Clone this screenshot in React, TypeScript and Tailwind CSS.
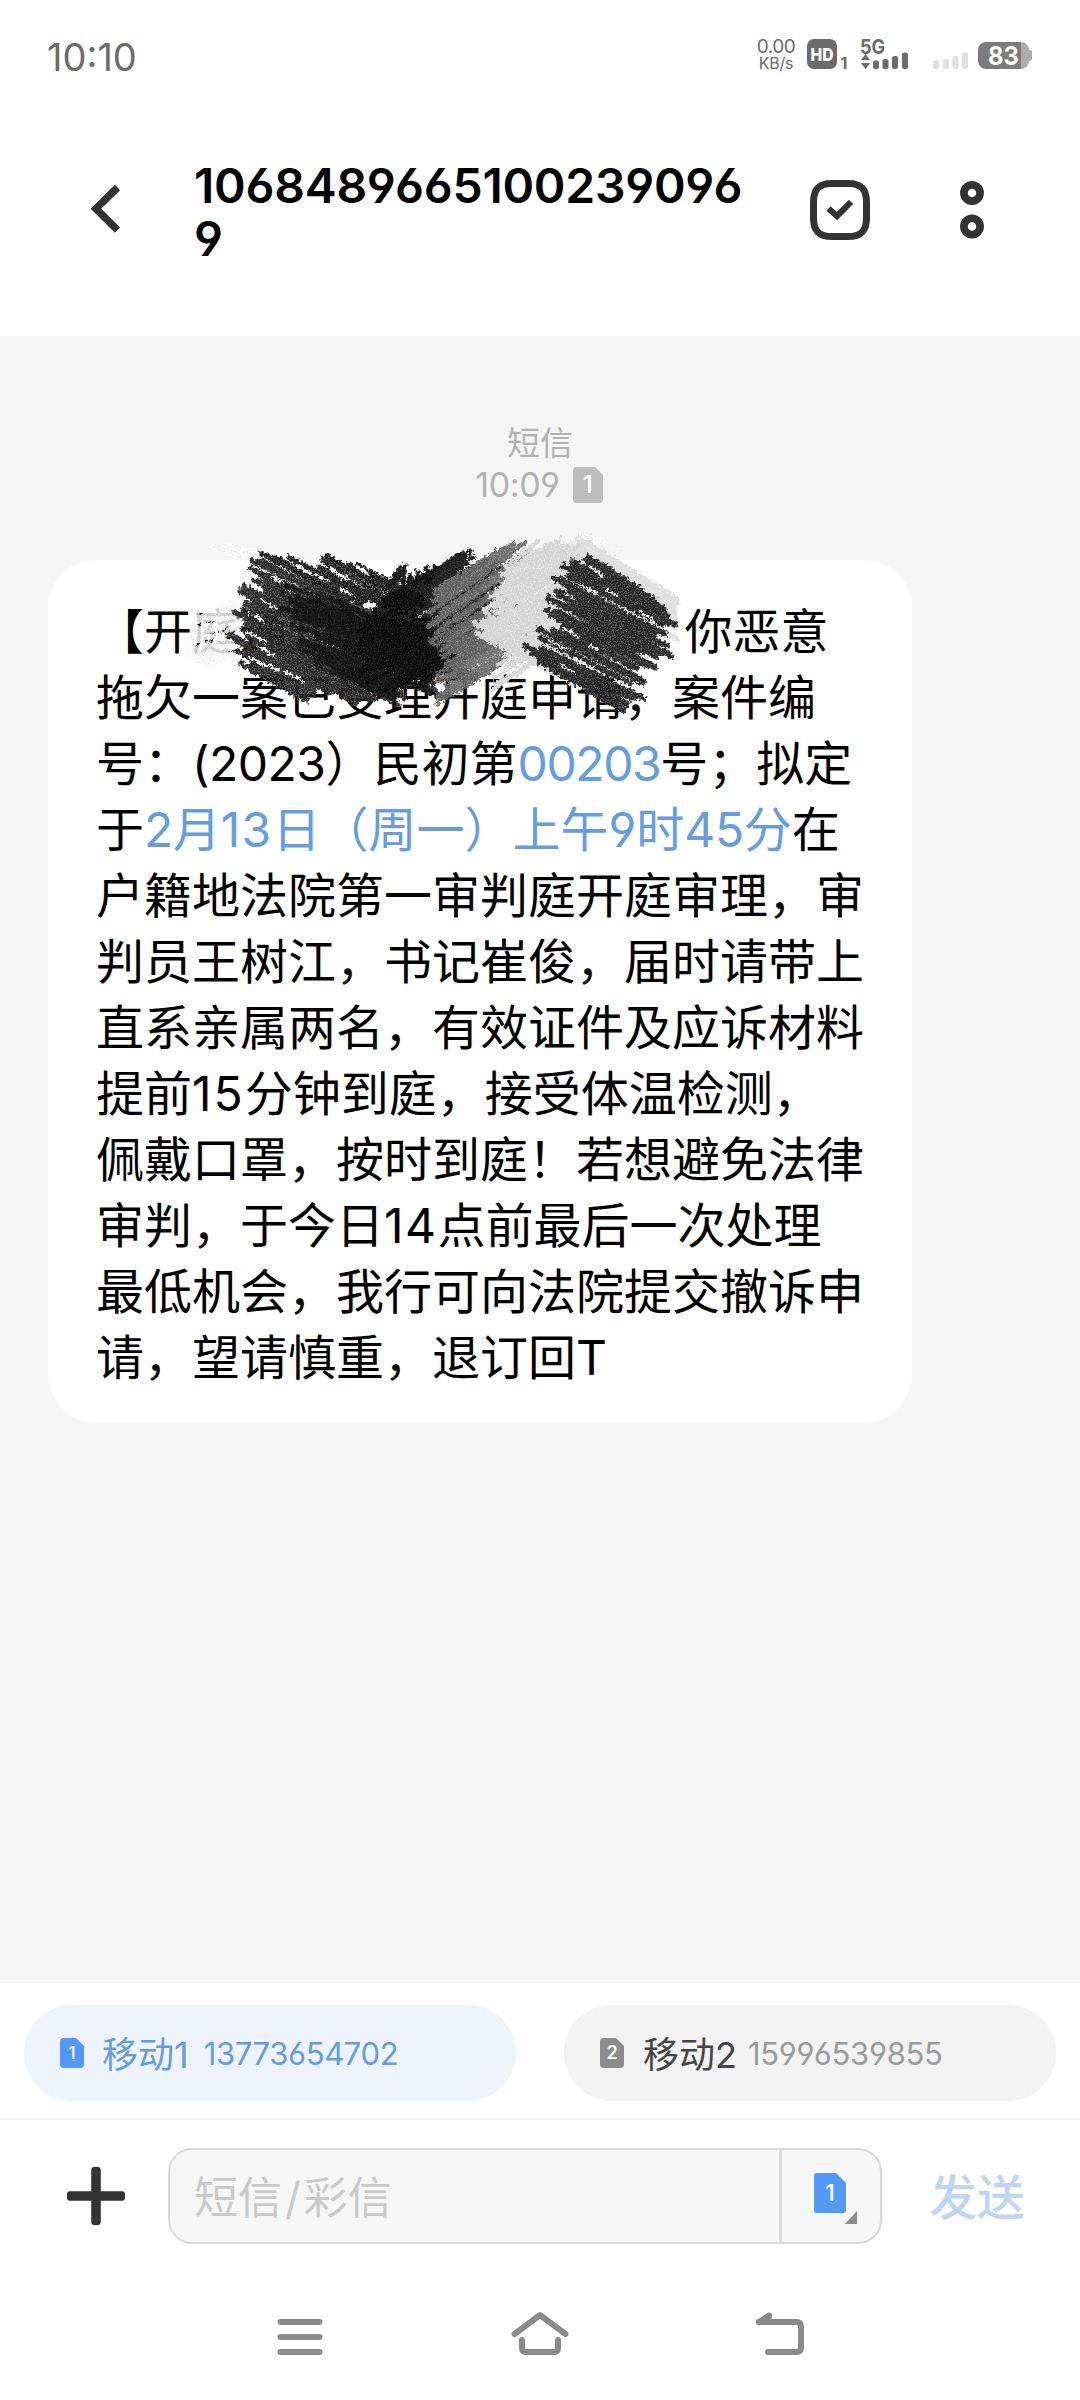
import type { ReactNode } from 'react'

type Sweep = [number, number, number, number]

/* Deterministic random numbers, so that the marker strokes are stable. */
function makeRandom(seed: number) {
  let s = seed
  return () => {
    s = (s * 1664525 + 1013904223) % 4294967296
    return s / 4294967296
  }
}

/* Fills the area swept between key segments with rough parallel strokes. */
function hatch(keys: Sweep[], count: number, jitter: number, seed: number) {
  const rnd = makeRandom(seed)
  let d = ''
  for (let i = 0; i < count; i++) {
    const t = (i / (count - 1)) * (keys.length - 1)
    const k = Math.min(Math.floor(t), keys.length - 2)
    const f = t - k
    const p = keys[k].map((v, j) => v + (keys[k + 1][j] - v) * f)
    const dx = p[2] - p[0]
    const dy = p[3] - p[1]
    const len = Math.hypot(dx, dy) || 1
    const a = (rnd() - 0.5) * jitter
    const b = (rnd() - 0.5) * jitter
    const x1 = p[0] + (dx / len) * a
    const y1 = p[1] + (dy / len) * a + (rnd() - 0.5) * 5
    const x2 = p[2] + (dx / len) * b
    const y2 = p[3] + (dy / len) * b + (rnd() - 0.5) * 5
    d += `M${x1.toFixed(1)} ${y1.toFixed(1)}L${x2.toFixed(1)} ${y2.toFixed(1)}`
  }
  return d
}

const leftTop = hatch([[266, 558, 350, 604], [290, 558, 370, 600], [310, 566, 400, 615], [330, 560, 410, 604], [350, 560, 430, 604]], 10, 18, 12)
const leftDark = hatch(
  [
    [268, 564, 420, 640],
    [260, 580, 440, 668],
    [252, 596, 430, 684],
    [248, 616, 390, 692],
    [240, 622, 360, 694],
    [238, 642, 326, 694],
    [242, 664, 312, 704],
  ],
  25, 32, 7,
)
const leftInner = hatch([[300, 590, 460, 640], [310, 620, 460, 670], [310, 650, 430, 690], [330, 670, 380, 694]], 20, 60, 17)
const innerTop = hatch([[390, 586, 398, 572], [402, 584, 405, 568], [416, 584, 418, 572], [428, 580, 436, 566]], 7, 8, 18)
const blackCore = hatch(
  [
    [392, 596, 440, 566],
    [372, 622, 470, 556],
    [350, 654, 480, 568],
    [360, 670, 500, 590],
    [380, 680, 510, 606],
    [410, 690, 500, 640],
  ],
  28, 40, 21,
)
const grayMid = hatch(
  [
    [440, 588, 508, 543],
    [432, 610, 522, 545],
    [438, 632, 520, 580],
    [448, 650, 525, 604],
    [450, 664, 530, 622],
    [440, 690, 520, 644],
    [440, 700, 506, 660],
  ],
  30, 24, 33,
)
const lightLeft = hatch(
  [
    [510, 562, 530, 548],
    [486, 602, 572, 545],
    [492, 616, 580, 560],
    [496, 634, 590, 580],
    [510, 650, 590, 610],
    [498, 684, 570, 640],
  ],
  38, 22, 41,
)
const lightRight = hatch(
  [
    [590, 545, 672, 596],
    [558, 548, 674, 612],
    [530, 556, 668, 636],
    [510, 580, 640, 655],
    [490, 616, 600, 685],
    [478, 634, 575, 686],
  ],
  32, 18, 55,
)
const paleTop = hatch([[552, 550, 582, 534], [540, 562, 590, 540], [600, 560, 620, 548]], 10, 8, 60)
const rightDark = hatch(
  [
    [594, 561, 636, 588],
    [570, 561, 664, 608],
    [562, 576, 664, 628],
    [558, 592, 664, 648],
    [556, 612, 650, 662],
    [550, 628, 644, 678],
    [532, 648, 634, 698],
    [546, 666, 614, 704],
  ],
  30, 26, 71,
)
const leftGaps = 'M272 577L282 583M298 566L312 575M316 574l12 7M262 600l14 9M284 590l10 7M333 571l16 10M356 566l12 8M250 614l14 7M246 632l20 10M262 648l12 8M250 657l16 9M286 672l18 10M320 664l10 6M340 588l12 7M376 640l8 6M268 664l12 7'
const rightGaps = 'M588 566l14 8M580 584l16 9M594 570l8 6M606 590l10 5M566 594l8 5M562 628l16 8M548 640l18 9M572 658l20 10M560 664l14 8M640 612l12 7M616 680l12 6M640 655l12 5M590 646l8 4'
const erased = hatch([[196, 616, 234, 602], [194, 634, 236, 618], [190, 656, 236, 638], [206, 664, 236, 652]], 13, 6, 82)
const smear = hatch([[212, 548, 240, 558], [226, 544, 262, 558]], 5, 8, 91)

function Chalk({ id, grain, seed }: { id: string; grain: string; seed: number }) {
  return (
    <filter id={id} x="-10%" y="-10%" width="120%" height="120%" colorInterpolationFilters="sRGB">
      <feTurbulence type="fractalNoise" baseFrequency="0.3" numOctaves="2" seed={seed} result="rough" />
      <feDisplacementMap in="SourceGraphic" in2="rough" scale="8" xChannelSelector="R" yChannelSelector="G" result="shape" />
      <feTurbulence type="fractalNoise" baseFrequency="0.7" numOctaves="2" seed={seed + 3} result="noise" />
      <feColorMatrix in="noise" type="matrix" values="0 0 0 0 1  0 0 0 0 1  0 0 0 0 1  5 0 0 0 -2.4" result="mask" />
      <feFlood floodColor={grain} />
      <feComposite in2="mask" operator="in" />
      <feComposite in2="shape" operator="in" result="speckle" />
      <feMerge>
        <feMergeNode in="shape" />
        <feMergeNode in="speckle" />
      </feMerge>
    </filter>
  )
}

function Scribble() {
  return (
    <svg className="absolute left-[132px] top-[-40px]" width="520" height="200" viewBox="180 520 520 200" fill="none" strokeLinecap="round" aria-hidden="true">
      <defs>
        <Chalk id="chalk-dark" grain="#5c5c5c" seed={4} />
        <Chalk id="chalk-black" grain="#262626" seed={9} />
        <Chalk id="chalk-gray" grain="#909090" seed={14} />
        <Chalk id="chalk-light" grain="#e6e6e6" seed={19} />
      </defs>
      <path d={smear} stroke="#ffffff" strokeWidth="6" opacity="0.7" filter="url(#chalk-light)" />
      <path d={erased} stroke="#ffffff" strokeWidth="4.5" opacity="0.85" filter="url(#chalk-light)" />
      <path d={leftTop} stroke="#1c1c1c" strokeWidth="5" filter="url(#chalk-dark)" />
      <path d={leftDark} stroke="#1c1c1c" strokeWidth="5.8" filter="url(#chalk-dark)" opacity="0.94" />
      <path d={leftGaps} stroke="#ffffff" strokeWidth="2.2" filter="url(#chalk-light)" />
      <path d={leftInner} stroke="#0c0c0c" strokeWidth="5" filter="url(#chalk-black)" opacity="0.8" />
      <path d={innerTop} stroke="#1c1c1c" strokeWidth="5" filter="url(#chalk-black)" />
      <path d={blackCore} stroke="#060606" strokeWidth="5" filter="url(#chalk-black)" opacity="0.9" />
      <path d={grayMid} stroke="#626262" strokeWidth="4.5" filter="url(#chalk-gray)" opacity="0.92" />
      <path d={paleTop} stroke="#fcfcfc" strokeWidth="7" filter="url(#chalk-light)" />
      <path d={lightRight} stroke="#dcdcdc" strokeWidth="5.5" filter="url(#chalk-light)" opacity="0.92" />
      <path d={lightLeft} stroke="#d4d4d4" strokeWidth="3.6" filter="url(#chalk-light)" />
      <path d={rightDark} stroke="#1c1c1c" strokeWidth="5.8" filter="url(#chalk-dark)" opacity="0.95" />
      <path d={rightGaps} stroke="#f4f4f4" strokeWidth="2" filter="url(#chalk-light)" />
    </svg>
  )
}

function SimCard({ label, className, textClass, path, box }: { label: string; className: string; textClass: string; path: string; box: string }) {
  return (
    <span className={`relative flex shrink-0 items-center justify-center ${className}`}>
      <svg className="absolute inset-0 h-full w-full" viewBox={box} fill="currentColor" aria-hidden="true">
        <path d={path} />
      </svg>
      <span className={`relative text-white ${textClass}`}>{label}</span>
    </span>
  )
}

const SIM_SMALL = 'M4 0H16L24 8V26a4 4 0 0 1-4 4H4a4 4 0 0 1-4-4V4a4 4 0 0 1 4-4Z'

function StatusBar() {
  return (
    <div className="flex h-28 items-start justify-between pl-[47px] pr-[46px] text-[#6b6b6b]">
      <span className="mt-[33px] text-[38px] leading-[48px]">10:10</span>
      <div className="flex pt-[38px]">
        <div className="flex w-[40px] flex-col items-center">
          <span className="text-[19px] leading-[17px] tracking-[-0.5px]">0.00</span>
          <span className="text-[16px] leading-[17px] tracking-[-0.2px]">KB/s</span>
        </div>
        <svg className="ml-[10px]" width="228" height="34" viewBox="806 38 228 34" aria-hidden="true">
          <rect x="807" y="39" width="30" height="30" rx="7" fill="#6b6b6b" />
          <text x="822" y="60.5" textAnchor="middle" fontFamily="Inter" fontSize="18" fontWeight="800" fill="#fff" textLength="23" lengthAdjust="spacingAndGlyphs">HD</text>
          <text x="844" y="68.5" textAnchor="middle" fontFamily="Inter" fontSize="16" fontWeight="700" fill="#6b6b6b">1</text>
          <text x="860" y="53.5" fontFamily="Inter" fontSize="20" fontWeight="700" fill="#6b6b6b" textLength="25" lengthAdjust="spacingAndGlyphs">5G</text>
          <path d="M865.5 54l4.5 6h-9zM865.5 69l4.5-6h-9z" fill="#6b6b6b" />
          <g fill="#6b6b6b">
            <rect x="873" y="60.500" width="6" height="8.500" rx="2.500" />
            <rect x="882.500" y="59" width="6" height="10" rx="2.500" />
            <rect x="892" y="56" width="6" height="13" rx="2.500" />
            <rect x="902" y="52.500" width="6" height="16.500" rx="2.500" />
          </g>
          <g fill="#dfdfdf">
            <rect x="933" y="60.500" width="6" height="8.500" rx="2.500" />
            <rect x="943" y="59" width="6" height="10" rx="2.500" />
            <rect x="952.500" y="56" width="6" height="13" rx="2.500" />
            <rect x="962" y="52.500" width="6" height="16.500" rx="2.500" />
          </g>
          <path d="M1020 42h1a8 8 0 0 1 8 8c1.500 0 3 .5 3 2v7c0 1.500-1.500 2-3 2a8 8 0 0 1-8 8h-1z" fill="#ababab" />
          <path d="M1021 42h-35a8 8 0 0 0-8 8v11a8 8 0 0 0 8 8h35z" fill="#7c7c7c" />
          <text x="1003.500" y="65" textAnchor="middle" fontFamily="Inter" fontSize="26" fontWeight="700" fill="#fff" textLength="31" lengthAdjust="spacingAndGlyphs">83</text>
        </svg>
      </div>
    </div>
  )
}

function Header() {
  return (
    <header className="flex h-[224px] items-start text-[#333]">
      <svg className="ml-[84px] mt-[68px]" width="44" height="56" viewBox="84 180 44 56" fill="none" stroke="currentColor" strokeWidth="7.500" aria-hidden="true">
        <path d="M117.500 187.500L96 208.700l21.500 21.500" />
      </svg>
      <h1 className="ml-[66px] mt-[46.500px] w-[580px] text-[48px] font-semibold leading-[53px] tracking-[-0.250px] text-black">
        1068489665100239096
        <br />9
      </h1>
      <svg className="ml-9 mt-[68px]" width="60" height="60" viewBox="0 0 60 60" fill="none" stroke="currentColor" aria-hidden="true">
        <path strokeWidth="7" d="M3.500 22C3.500 9 9 3.500 22 3.500h16C51 3.500 56.500 9 56.500 22v16C56.500 51 51 56.500 38 56.500H22C9 56.500 3.500 51 3.500 38z" />
        <path strokeWidth="6" strokeLinejoin="miter" d="M18.500 28.500l8.500 7.500L41 21.800" />
      </svg>
      <svg className="ml-[90px] mt-[69px]" width="24" height="58" viewBox="0 0 24 58" fill="none" stroke="currentColor" strokeWidth="7.700" aria-hidden="true">
        <circle cx="12" cy="12" r="8.100" />
        <circle cx="12" cy="45.500" r="8.100" />
      </svg>
    </header>
  )
}

function Line({ children }: { children: ReactNode }) {
  return <div className="h-[66px] whitespace-nowrap">{children}</div>
}

function Message() {
  return (
    <article className="relative ml-12 mt-[56px] h-[863px] w-[864px] rounded-[48px] bg-white pl-12 pt-[39px] text-[48px] leading-[66px] text-black">
      <Line>
        【开庭通知】致 <span className="ml-[239px]">你恶意</span>
      </Line>
      <Line>拖欠一案已受理开庭申请，案件编</Line>
      <Line>
        号：<span className="tracking-[-0.5px]">(2023</span>）民初第
        <span className="tracking-[-1.400px] text-[#679ddd]">00203</span>号；拟定
      </Line>
      <Line>
        于
        <span className="text-[#679ddd]">
          <span className="tracking-[-0.500px]">2</span>月<span className="tracking-[1.200px]">13</span>日（周一）上午
          <span>9</span>时<span className="tracking-[-0.400px]">45</span>分
        </span>
        在
      </Line>
      <Line>户籍地法院第一审判庭开庭审理，审</Line>
      <Line>判员王树江，书记崔俊，届时请带上</Line>
      <Line>直系亲属两名，有效证件及应诉材料</Line>
      <Line>
        提前<span className="tracking-[2px]">15</span>分钟到庭，接受体温检测，
      </Line>
      <Line>佩戴口罩，按时到庭！若想避免法律</Line>
      <Line>
        审判，于今日<span className="tracking-[1.500px]">14</span>点前最后一次处理
      </Line>
      <Line>最低机会，我行可向法院提交撤诉申</Line>
      <Line>请，望请慎重，退订回T</Line>
      <Scribble />
    </article>
  )
}

function SimPills() {
  return (
    <div className="flex h-[135px] gap-12 px-6 pt-[22px]">
      <div className="flex h-24 flex-1 items-center rounded-full bg-[#edf4fe] pl-9 text-[#679bd9]">
        <SimCard label="1" className="h-[30px] w-6 text-[#5599f8]" textClass="text-[17px] leading-none font-medium" path={SIM_SMALL} box="0 0 24 30" />
        <span className="ml-[18px] pt-[3px] text-[36px] leading-[48px]">移动1</span>
        <span className="ml-[15px] pt-[2px] text-[31px] leading-[48px] tracking-[-0.350px]">13773654702</span>
      </div>
      <div className="flex h-24 flex-1 items-center rounded-full bg-[#f3f3f3] pl-9">
        <SimCard label="2" className="h-[30px] w-6 text-[#8b8b8b]" textClass="text-[18px] leading-none font-semibold" path={SIM_SMALL} box="0 0 24 30" />
        <span className="ml-[19px] pt-[3px] text-[36px] leading-[48px] text-[#444]">移动2</span>
        <span className="ml-[11px] pt-[2px] text-[31px] leading-[48px] tracking-[-0.300px] text-[#9b9b9b]">15996539855</span>
      </div>
    </div>
  )
}

function Composer() {
  return (
    <div className="flex h-[162px] items-start border-t-2 border-[#f5f5f5] pt-7">
      <svg className="ml-[67px] mt-[19px]" width="58" height="58" viewBox="0 0 58 58" fill="#333" aria-hidden="true">
        <rect x="0" y="24.200" width="58" height="9.600" rx="3" />
        <rect x="24.200" y="0" width="9.600" height="58" rx="3" />
      </svg>
      <div className="ml-[43px] flex h-24 w-[714px] rounded-[24px] border-2 border-[#dadada] bg-[#f7f7f7]">
        <span className="flex-1 pl-6 text-[44px] leading-[96px] text-[#c9c9c9]">
          短信<span className="px-[3px]">/</span>彩信
        </span>
        <span className="relative w-[101px] border-l-[3px] border-[#dadada]">
          <SimCard label="1" className="ml-8 mt-[23px] h-10 w-8 text-[#5599f8]" textClass="text-[23px] leading-none font-medium" path="M3 0H22L32 10V37a3 3 0 0 1-3 3H3a3 3 0 0 1-3-3V3a3 3 0 0 1 3-3Z" box="0 0 32 40" />
          <svg className="absolute left-[63px] top-[61px]" width="12" height="13" viewBox="0 0 12 13" fill="#8c8c8c" aria-hidden="true">
            <path d="M12 0v13H0z" />
          </svg>
        </span>
      </div>
      <span className="ml-[47px] text-[48px] font-medium leading-[100px] text-[#bfd5f3]">发送</span>
    </div>
  )
}

function NavBar() {
  return (
    <nav className="flex h-[120px] justify-between px-[270px] pt-6">
      <svg width="60" height="60" viewBox="270 2304 60 60" fill="none" stroke="#8b8b8b" strokeWidth="6" strokeLinecap="round" aria-hidden="true">
        <path d="M280.500 2322h39M280.500 2337h39M280.500 2352h39" />
      </svg>
      <svg width="60" height="60" viewBox="510 2304 60 60" fill="none" stroke="#8b8b8b" strokeWidth="6" strokeLinecap="round" strokeLinejoin="round" aria-hidden="true">
        <path d="M514.500 2334L540 2315l25.500 19M522 2340v8q0 4 4 4h28q4 0 4-4v-8" />
      </svg>
      <svg width="60" height="60" viewBox="750 2304 60 60" fill="none" stroke="#8b8b8b" strokeWidth="6" strokeLinecap="round" strokeLinejoin="round" aria-hidden="true">
        <path d="M768 2352h28.500q4.500 0 4.500-4.500v-21q0-4.500-4.500-4.500H759" />
        <path d="M769 2315.500L759 2322h9z" fill="#8b8b8b" />
      </svg>
    </nav>
  )
}

export default function App() {
  return (
    <div
      lang="zh-CN"
      className="flex h-[2400px] w-[1080px] flex-col overflow-hidden bg-white font-['Inter','Noto_Sans_CJK_SC',sans-serif] [font-feature-settings:'cv03','cv04'] [text-spacing-trim:space-all]"
    >
      <StatusBar />
      <Header />
      <main className="h-[1647px] bg-[#f6f6f6] pt-[85px]">
        <div className="flex flex-col items-center text-[#b2b2b2]">
          <span className="text-[33px] leading-[44px]">短信</span>
          <div className="mr-[2px] flex h-[39px] items-center">
            <span className="text-[34px] leading-[40px] tracking-[-0.400px]">10:09</span>
            <SimCard label="1" className="ml-[13px] h-9 w-[30px] text-[#bdbdbd]" textClass="text-[24px] leading-none font-medium" path="M4 0H22L30 8V32a4 4 0 0 1-4 4H4a4 4 0 0 1-4-4V4a4 4 0 0 1 4-4Z" box="0 0 30 36" />
          </div>
        </div>
        <Message />
      </main>
      <SimPills />
      <Composer />
      <NavBar />
    </div>
  )
}
